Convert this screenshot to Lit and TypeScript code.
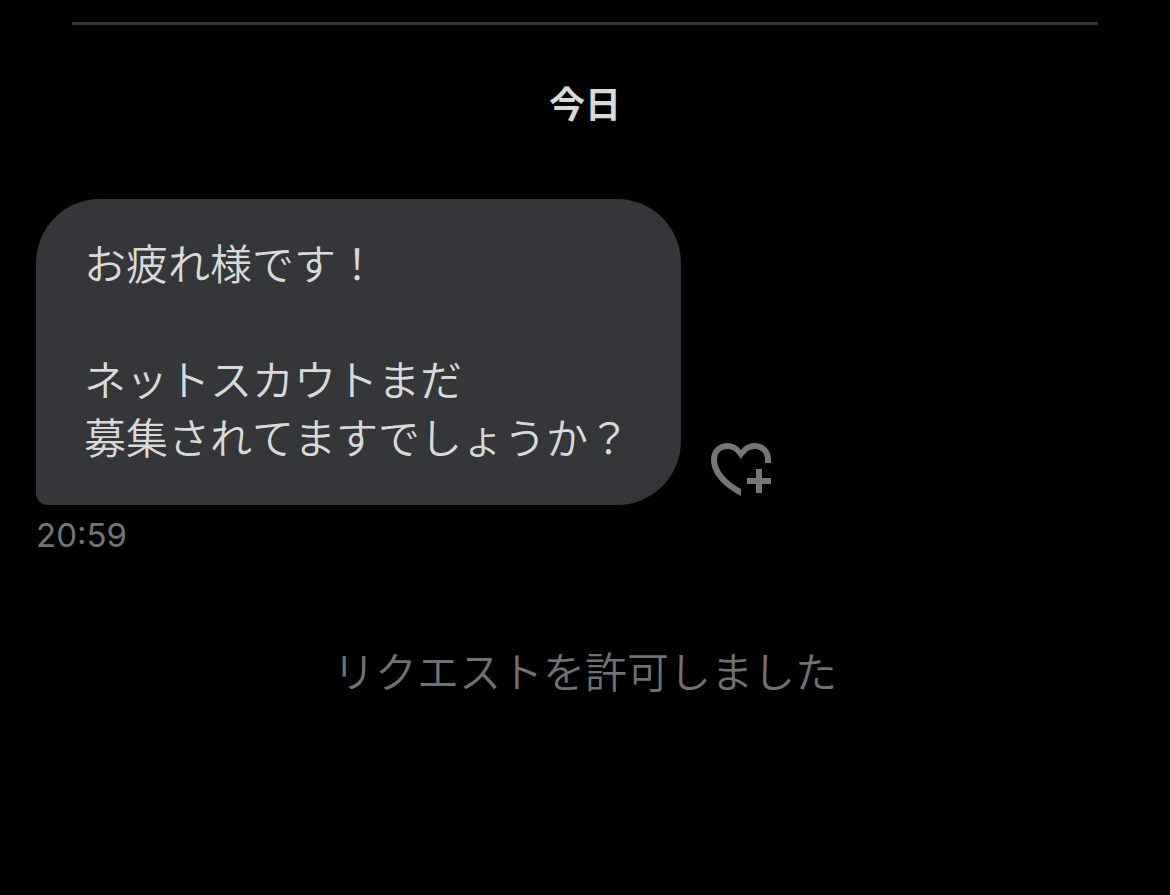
import { LitElement, html, css } from "lit";
import { customElement } from "lit/decorators.js";

@customElement("app-root")
export class AppRoot extends LitElement {
  static styles = css`
    :host {
      display: block;
      box-sizing: border-box;
      min-height: 100vh;
      padding: 22px 36px;
      background: #000;
      color: #d9d9d9;
      font-family: Inter, "Noto Sans CJK JP", sans-serif;
      font-size: 42px;
      font-kerning: none;
      line-height: 58px;
    }
    .divider {
      height: 3px;
      margin: 0 36px;
      border: 0;
      background: #333335;
    }
    .day {
      margin: 51px 0 65px;
      text-align: center;
      font-size: 36px;
      font-weight: 700;
      line-height: 58px;
    }
    .row {
      display: flex;
      align-items: flex-end;
      gap: 28px;
    }
    .bubble {
      box-sizing: border-box;
      padding: 37px 51px 37px 48px;
      border-radius: 64px 64px 64px 12px;
      background: #353639;
      font-weight: 350;
      white-space: pre-line;
    }
    .text {
      margin: 0;
    }
    .react {
      display: block;
      padding: 0;
      border: 0;
      background: none;
      color: #76767a;
      cursor: pointer;
    }
    .react svg {
      display: block;
    }
    .time {
      display: block;
      margin-top: 10px;
      font-size: 33px;
      line-height: 40px;
      font-feature-settings: "case";
      color: #747477;
    }
    .status {
      margin: 89px 0 0;
      text-align: center;
      color: #717174;
      font-weight: 350;
    }
  `;

  render() {
    return html`
      <main>
        <hr class="divider" />
        <h2 class="day">今日</h2>
        <div class="row">
          <div class="bubble"><p class="text">お疲れ様です！

ネットスカウトまだ
募集されてますでしょうか？</p></div>
          <button class="react" aria-label="リアクションを追加">
            <svg width="66" height="66" viewBox="0 0 66 66" fill="currentColor">
              <path d="M32 11C35 7 40 4 45.500 4C55 4 62 11 62 20.500V24H56V20.500C56 14 51.500 10 45.500 10C39.500 10 36 14 32 20C28 14 24.500 10 18.500 10C12.500 10 8 14 8 20.500C8 32 18 42 32 50V57C14 47.500 2 35 2 20.500C2 11 9 4 18.500 4C24 4 29 7 32 11Z" />
              <path d="M47 30H53V39H62V45H53V54H47V45H38V39H47Z" />
            </svg>
          </button>
        </div>
        <time class="time">20:59</time>
        <p class="status">リクエストを許可しました</p>
      </main>
    `;
  }
}
